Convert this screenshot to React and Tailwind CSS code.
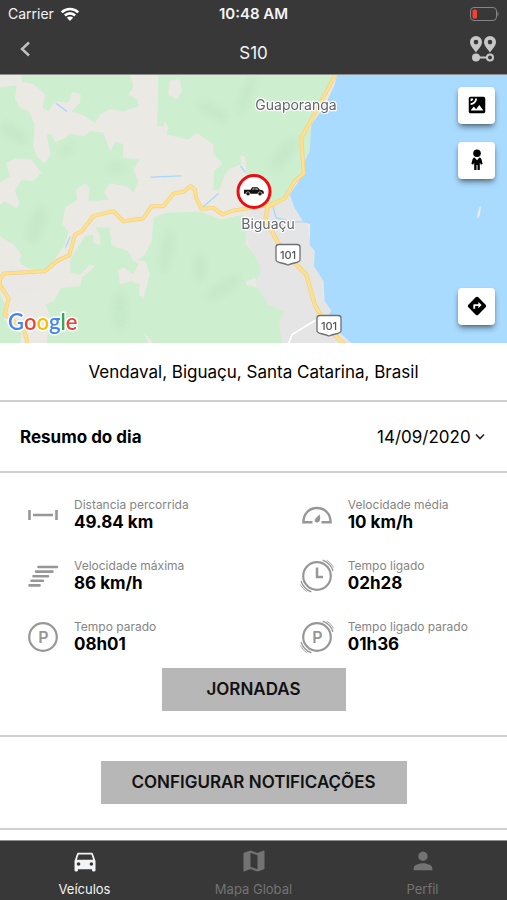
import { MdSatellite, MdDirections, MdDirectionsCar, MdMap, MdPerson } from "react-icons/md";

function StatusBar() {
  return (
    <div className="grid h-7 grid-cols-3 items-center px-2 text-sm text-gray-100">
      <div className="flex items-center gap-1.5">
        <span>Carrier</span>
        <svg className="h-3.5 w-5" viewBox="0 0 20 14" fill="none" stroke="white" strokeWidth="2.6" aria-hidden="true">
          <path d="M1.8 5.4a11.6 11.6 0 0 1 16.4 0" />
          <path d="M4.9 8.5a7.2 7.2 0 0 1 10.2 0" />
          <path d="M10 14 6.9 10.8a4.4 4.4 0 0 1 6.2 0Z" fill="white" stroke="none" />
        </svg>
      </div>
      <div className="text-center text-[15px] font-semibold">10:48 AM</div>
      <svg className="h-4 w-8 justify-self-end" viewBox="0 0 32 16" aria-hidden="true">
        <rect x="3.5" y="1.5" width="26" height="13" rx="3.5" fill="none" stroke="#858585" />
        <rect x="5.5" y="3.5" width="4.5" height="9" rx="1.6" fill="#fa3e30" />
        <path d="M30.500 5.600a3.200 3.200 0 0 1 0 4.800Z" fill="#858585" />
      </svg>
    </div>
  );
}

function RouteIcon() {
  return (
    <svg className="h-7 w-7" viewBox="0 0 28 28" aria-hidden="true">
      <g fill="#c8c8c8" fillRule="evenodd">
        <path d="M7 1a6 6 0 0 0-6 6c0 3.8 3.4 6.400 6 10.500 2.600-4.100 6-6.700 6-10.500a6 6 0 0 0-6-6Zm0 3.800a2.300 2.300 0 1 1 0 4.600 2.300 2.300 0 0 1 0-4.600Z" />
        <path d="M21 1a6 6 0 0 0-6 6c0 3.800 3.400 6.400 6 10.500 2.600-4.100 6-6.700 6-10.500a6 6 0 0 0-6-6Zm0 3.800a2.300 2.300 0 1 1 0 4.600 2.300 2.300 0 0 1 0-4.600Z" />
        <circle cx="7" cy="22.500" r="4" />
        <path d="M9 21.500h9v2H9z" />
      </g>
      <circle cx="21" cy="22.500" r="3" fill="none" stroke="#c8c8c8" strokeWidth="2" />
    </svg>
  );
}

function PersonIcon() {
  return (
    <svg className="h-[22px] w-3.5" viewBox="0 0 14 22" aria-hidden="true">
      <circle cx="7" cy="4.300" r="3.800" />
      <path d="M4.500 8.600 7 11.200 9.500 8.600c1.200.2 1.700.9 2 2l1.100 4.200-1.700.9-1.100-2.200V21H7.500v-5h-1v5H4.200v-7.500l-1.100 2.200-1.700-.9 1.100-4.200c.3-1.100.8-1.800 2-2Z" />
    </svg>
  );
}

function Shield({ x, y }) {
  return (
    <g transform={`translate(${x} ${y})`}>
      <path d="M-12-7.500c0-2 1-2.500 3-2.500H9c2 0 3 .5 3 2.500V5.500c0 3-7 2.500-12 5-5-2.500-12-2-12-5Z" fill="#fff" stroke="#6b7075" strokeWidth="1.300" />
      <text y="4" textAnchor="middle" fontSize="11" fontWeight="500" fill="#555">101</text>
    </g>
  );
}

const ROAD_WEST =
  "M85 815 70 760 14 720 26 672 0 632V614L12 597 135 590 170 560 208 542 225 480 245 470 280 425 340 410 370 440 430 432 455 395H490L520 358 550 352 572 335 585 345 588 370 605 403 640 400 668 420 700 408 740 402 814 390 854 372 884 320 911 298 904 190 959 90 1012-10";
const ROAD_SOUTH = "M830 383 802 398 797 435 834 505 889 570 919 600 944 690 984 760 1038 815";

function MapDrawing() {
  return (
    <svg className="block h-full w-full" viewBox="0 0 507 269" preserveAspectRatio="xMidYMid slice" role="img" aria-label="Mapa de Biguaçu">
      <defs>
        <filter id="soft" x="-50%" y="-50%" width="200%" height="200%">
          <feGaussianBlur stdDeviation="10" />
        </filter>
      </defs>
      <rect width="507" height="269" fill="#ebe9e4" />
      <g transform="scale(.33333)" strokeLinejoin="round" strokeLinecap="round">
        <g fill="#cdeecf">
          <path d="M65 0H388L400 35 385 60 412 75 415 96 370 110 330 104 300 120 285 146 250 122 215 112 240 85 242 60 218 52 204 85 165 80 145 110 128 100 135 60 100 28 65 22Z" />
          <path d="M0 38 50 32 45 72 60 100 88 112 104 150 100 215 110 245 134 268 152 240 140 180 155 180 165 205 195 190 210 178 255 185 270 170 310 175 332 232 345 200 370 210 368 250 420 255 400 285 415 320 400 355 380 335 330 326 312 352 325 375 265 382 268 340 255 326 228 345 232 375 195 400 186 450 205 470 195 510 160 560 130 590 80 580 58 560 65 540 40 510 0 485Z" />
          <path d="M475 0H1009L959 90 904 190 911 298 884 320 854 372 805 388 750 395 750 330 740 300 736 245 722 242 722 270 690 282 672 305 658 345 640 348 642 290 668 268 640 240 640 210 590 175 565 195 500 180 506 160 492 140 492 155 472 155Z" />
          <path d="M462 428 500 415 600 412 665 435 730 420 742 470 736 510 759 530 778 570 780 600 765 625 805 690 855 710 838 740 846 807H140L150 720 135 690 160 680 185 640 240 635 245 610 286 575 270 570 240 600 212 595 210 560 232 520 255 485 280 480 280 505 300 512 300 480 285 458 328 460 335 512 385 530 400 562 432 545 455 500Z" />
          <path d="M0 655 14 690 12 735 40 765 65 775 60 807H0Z" />
          <path d="M905 190 932 155 934 220 915 255Z" />
        </g>
        <g fill="#ebe9e4">
          <path d="M18 265 45 252 95 255 125 295 100 320 65 315 45 350 58 385 50 402 15 380 0 390V325L30 305Z" />
          <path d="M510 18 540 14 546 50 530 76 505 60Z" />
          <path d="M354 588 372 578 400 600 415 570 400 555 436 560 450 600 432 668 416 662 420 630 395 620 360 630Z" />
          <path d="M738 620 765 610 780 640 740 632ZM432 775 460 807H445Z" />
        </g>
        <g fill="#aedab4" opacity=".2" filter="url(#soft)">
          <ellipse cx="40" cy="175" rx="42" ry="18" transform="rotate(35 40 175)" />
          <ellipse cx="200" cy="225" rx="25" ry="9" transform="rotate(-40 200 225)" />
          <ellipse cx="350" cy="280" rx="28" ry="12" />
          <ellipse cx="110" cy="450" rx="20" ry="55" transform="rotate(20 110 450)" />
          <ellipse cx="500" cy="530" rx="15" ry="60" transform="rotate(10 500 530)" />
          <ellipse cx="670" cy="640" rx="60" ry="16" transform="rotate(-35 670 640)" />
          <ellipse cx="360" cy="710" rx="20" ry="55" />
          <ellipse cx="600" cy="580" rx="15" ry="40" />
          <ellipse cx="740" cy="60" rx="13" ry="60" transform="rotate(20 740 60)" />
          <ellipse cx="850" cy="240" rx="60" ry="20" transform="rotate(-50 850 240)" />
          <ellipse cx="640" cy="110" rx="50" ry="15" transform="rotate(30 640 110)" />
        </g>
        <path d="M750 400 800 392 854 372 870 360 918 440 936 520 975 620 1000 720 1060 807H846L838 740 855 710 805 690 765 625 780 600 778 570 755 530 736 480 745 440Z" fill="#e5e5e5" />
        <path d="M0 570 60 580 130 600 110 650 20 665 0 620Z" fill="#e9e8e7" />
        <path d="M1012 0 1004 30 974 95 934 150 929 230 914 260 910 300 869 360 884 400 909 440 931 450 929 510 944 530 942 575 971 620 974 680 994 708 984 725 1014 770 1056 807H1521V0Z" fill="#a9daff" />
        <path d="M1438 398 1443 396 1440 420 1434 432 1430 428Z" fill="#e8eaeb" />
        <path d="M1456 316h6" stroke="#e6d8b0" strokeWidth="6" />
        <g fill="none" stroke="#a9d6fb" strokeWidth="4">
          <path d="M453 308 542 304M210 488 197 518M168 86 200 110M722 275 735 292M610 396 655 358M820 398 828 430 884 442H930" />
        </g>
        <path d="M866 807 876 780 945 738" fill="none" stroke="#fff" strokeWidth="5" />
        <g fill="none">
          <path d={ROAD_WEST} stroke="#efd18a" strokeWidth="12" />
          <path d={ROAD_SOUTH} stroke="#efd18a" strokeWidth="13" />
          <path d={ROAD_WEST} stroke="#ffe08c" strokeWidth="8" />
          <path d={ROAD_SOUTH} stroke="#ffe08c" strokeWidth="9" />
        </g>
      </g>
      <g fill="#616569" stroke="#fff" strokeWidth="2.500" strokeLinejoin="round" paintOrder="stroke" fontSize="14" textAnchor="middle">
        <text x="296" y="35">Guaporanga</text>
        <text x="268" y="154">Biguaçu</text>
      </g>
      <Shield x={288} y={180} />
      <Shield x={329} y={251} />
      <circle cx="254" cy="117" r="16" fill="#fff" stroke="#f00b12" strokeWidth="3" />
      <g fill="#111">
        <path d="M244 115.300h6.600l1.500-2.500h5.400l2.300 2.500c2.500.3 3.900.9 4 2.400v1.600h-19.800Z" />
        <circle cx="248" cy="119.300" r="2" stroke="#fff" strokeWidth=".6" />
        <circle cx="260" cy="119.300" r="2" stroke="#fff" strokeWidth=".6" />
        <path d="M252.900 113.700h1.600v1.600h-2.500zM255.300 113.700h1.800l1.500 1.600h-3.300z" fill="#aaa" />
      </g>
      <text x="8" y="255" fontSize="22" fontWeight="600" stroke="#fff" strokeWidth="3" strokeLinejoin="round" paintOrder="stroke" className="font-['Lato',sans-serif]">
        <tspan fill="#4285f4">G</tspan>
        <tspan fill="#ea4335">o</tspan>
        <tspan fill="#fbbc05">o</tspan>
        <tspan fill="#4285f4">g</tspan>
        <tspan fill="#34a853">l</tspan>
        <tspan fill="#ea4335">e</tspan>
      </text>
    </svg>
  );
}

function MapButton({ label, children }) {
  return (
    <button type="button" aria-label={label} className="flex size-[37px] items-center justify-center rounded bg-white pb-0.5 text-[22px] text-black shadow-md shadow-black/40">
      {children}
    </button>
  );
}

function StatIcon({ name }) {
  const arcs = (
    <g strokeWidth="1.300">
      <path d="M20.700-.8A16.800 16.800 0 0 1 31 10M9.300 30.800A16.800 16.800 0 0 1-1 20" />
      <path d="M24.800-.9A18.700 18.700 0 0 1 31.700 6.500M5.200 30.900A18.700 18.700 0 0 1-1.700 23.500" strokeWidth=".8" />
    </g>
  );
  return (
    <svg className="size-[30px] shrink-0 overflow-visible" viewBox="0 0 30 30" fill="none" stroke="#979797" strokeWidth="2" aria-hidden="true">
      {name === "distance" && <path d="M1.500 10v10M28.500 10v10M5 15h20" strokeWidth="2.600" />}
      {name === "average" && (
        <>
          <path d="M10.500 22.300H1.400C1.400 14 7 8 15 8s13.600 6 13.600 14.300h-9.100" strokeWidth="2.400" />
          <path d="M17.800 14.500c.8 3 .7 8-2.800 8-4 0-2.800-4 2.800-8Z" fill="#979797" stroke="none" />
        </>
      )}
      {name === "max" && <path d="M10.500 6h18.500M8 10.600h16.500M5.500 15.200h14.500M3.500 19.800h11.500M1.500 24.400h10" strokeWidth="2.600" strokeLinecap="round" />}
      {name === "on" && (
        <>
          <circle cx="15" cy="15" r="13.800" strokeWidth="2.200" />
          {arcs}
          <path d="M15 6.500v9.500h6" strokeWidth="2.500" />
        </>
      )}
      {(name === "parked" || name === "idle") && (
        <>
          <circle cx="15" cy="15" r="13.800" strokeWidth="2.200" />
          {name === "idle" && arcs}
          <text x="15.500" y="20.500" textAnchor="middle" fontSize="16" fontWeight="600" fill="#979797" stroke="none">P</text>
        </>
      )}
    </svg>
  );
}

const STATS = [
  { icon: "distance", label: "Distancia percorrida", value: "49.84 km" },
  { icon: "average", label: "Velocidade média", value: "10 km/h" },
  { icon: "max", label: "Velocidade máxima", value: "86 km/h" },
  { icon: "on", label: "Tempo ligado", value: "02h28" },
  { icon: "parked", label: "Tempo parado", value: "08h01" },
  { icon: "idle", label: "Tempo ligado parado", value: "01h36" },
];

const TABS = [
  { label: "Veículos", Icon: MdDirectionsCar, active: true },
  { label: "Mapa Global", Icon: MdMap },
  { label: "Perfil", Icon: MdPerson },
];

export default function App() {
  return (
    <div className="flex min-h-screen flex-col bg-white font-['Inter','Liberation_Sans',sans-serif] text-black">
      <header className="border-b border-[#8f8f8f] bg-[#383838]">
        <StatusBar />
        <div className="grid h-[46px] grid-cols-3 items-center px-2.5">
          <button type="button" aria-label="Voltar" className="flex size-8 items-center justify-center justify-self-start pb-1">
            <svg className="h-4 w-3" viewBox="0 0 12 16" fill="none" stroke="#c2c2c2" strokeWidth="2.400" aria-hidden="true">
              <path d="M9 1.500 2 8l7 6.500" />
            </svg>
          </button>
          <h1 className="pt-1 text-center text-[17px] leading-6 text-gray-100">S10</h1>
          <button type="button" aria-label="Rotas" className="justify-self-end pb-1">
            <RouteIcon />
          </button>
        </div>
      </header>

      <section className="relative h-[268px] overflow-hidden">
        <MapDrawing />
        <div className="absolute inset-y-0 right-3 flex flex-col gap-[18px] pt-3 pb-[18px]">
          <MapButton label="Satélite"><MdSatellite /></MapButton>
          <MapButton label="Street View"><PersonIcon /></MapButton>
          <div className="mt-auto">
            <MapButton label="Direções"><MdDirections /></MapButton>
          </div>
        </div>
      </section>

      <main>
        <p className="border-b-2 border-[#d0d0d0] pt-[17px] pb-4 text-center text-[17px] leading-6">
          Vendaval, Biguaçu, Santa Catarina, Brasil
        </p>

        <section className="flex h-[71px] items-center justify-between border-b-2 border-[#d0d0d0] px-5">
          <h2 className="text-[17px] leading-6 font-bold">
            <label htmlFor="day">Resumo do dia</label>
          </h2>
          <div className="flex items-center gap-1">
            <select id="day" className="h-7 appearance-none bg-transparent text-[17px] leading-7" defaultValue="14/09/2020">
              <option>14/09/2020</option>
            </select>
            <svg className="mr-0.5 h-2 w-2.5" viewBox="0 0 10 8" fill="none" stroke="#222" strokeWidth="1.600" aria-hidden="true">
              <path d="m1 1.500 4 4 4-4" />
            </svg>
          </div>
        </section>

        <section className="flex flex-col items-center border-b-2 border-[#d0d0d0] py-6">
          <dl className="grid w-full grid-cols-[54fr_46fr] gap-y-[25px]">
            {STATS.map((s) => (
              <div key={s.icon} className="flex items-center gap-4 pl-7">
                <StatIcon name={s.icon} />
                <div className="pb-0.5 whitespace-nowrap">
                  <dt className="text-xs leading-4 text-[#858585]">{s.label}</dt>
                  <dd className="text-[17px] leading-[18px] font-bold">{s.value}</dd>
                </div>
              </div>
            ))}
          </dl>
          <button type="button" className="mt-[13px] h-[43px] w-46 bg-[#b7b7b7] text-[17px] font-semibold text-[#111]">JORNADAS</button>
        </section>

        <section className="flex justify-center border-b-2 border-[#d0d0d0] py-6">
          <button type="button" className="h-[43px] w-[306px] bg-[#b7b7b7] text-[17px] font-semibold text-[#111]">CONFIGURAR NOTIFICAÇÕES</button>
        </section>
      </main>

      <nav className="mt-auto grid h-[60px] grid-cols-3 border-t border-[#8f8f8f] bg-[#383838]">
        {TABS.map(({ label, Icon, active }) => (
          <a key={label} href="#" className={active ? "flex flex-col items-center pt-1.5 text-gray-100" : "flex flex-col items-center pt-1.5 text-[#737373]"}>
            <Icon className="size-7" />
            <span className="mt-1 text-[13px] leading-5">{label}</span>
          </a>
        ))}
      </nav>
    </div>
  );
}
